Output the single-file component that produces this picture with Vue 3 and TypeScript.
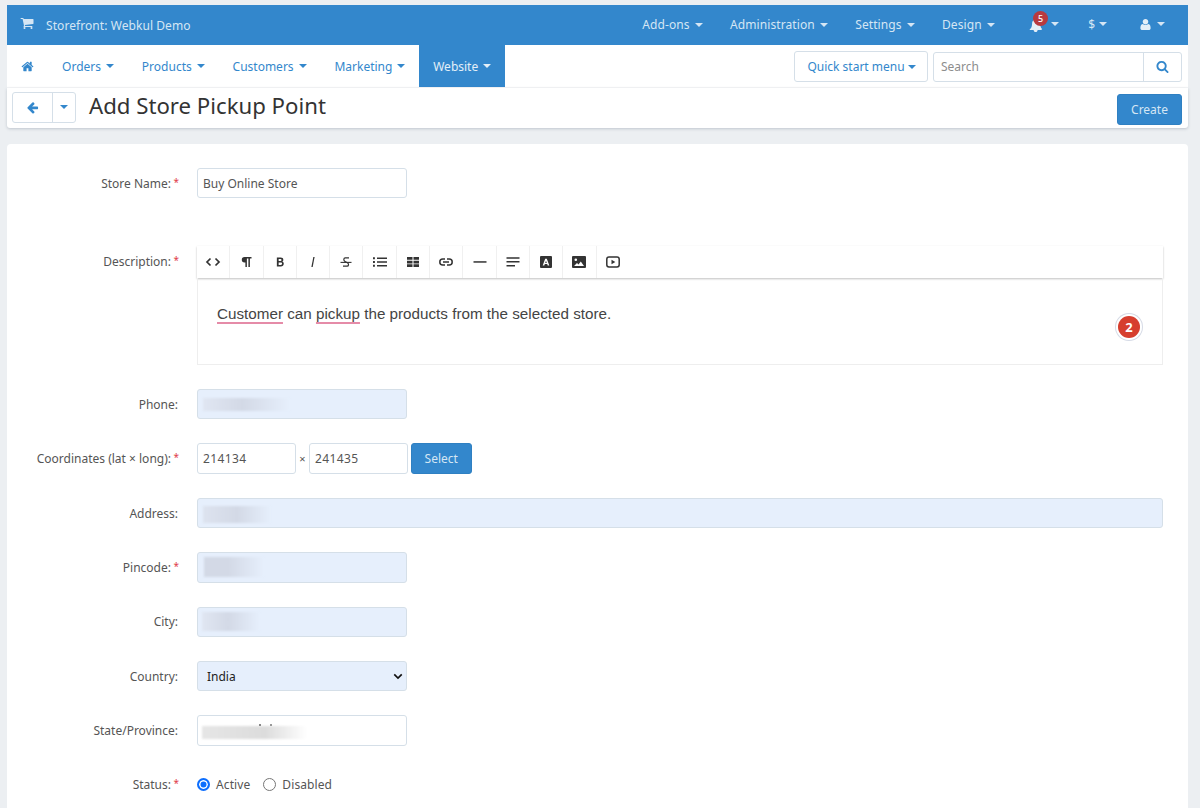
<script setup lang="ts">
const icons = {
  cart: 'M704 1536q0 52-38 90t-90 38-90-38-38-90 38-90 90-38 90 38 38 90zm896 0q0 52-38 90t-90 38-90-38-38-90 38-90 90-38 90 38 38 90zm128-1088v512q0 24-16.5 42.5t-40.5 21.5l-1044 122q13 60 13 70 0 16-24 64h920q26 0 45 19t19 45-19 45-45 19h-1024q-26 0-45-19t-19-45q0-11 8-31.5t16-36 21.5-40 15.5-29.5l-177-823h-204q-26 0-45-19t-19-45 19-45 45-19h256q16 0 28.5 6.5t19.5 15.5 13 24.5 8 26 5.5 29.5 4.5 26h1201q26 0 45 19t19 45z',
  home: 'M1472 992v480q0 26-19 45t-45 19h-384v-384h-256v384h-384q-26 0-45-19t-19-45v-480q0-1 .5-3t.5-3l575-474 575 474q1 2 1 6zm223-69l-62 74q-8 9-21 11h-3q-13 0-21-7l-692-577-692 577q-12 8-24 7-13-2-21-11l-62-74q-8-10-7-23.5t11-21.5l719-599q32-26 76-26t76 26l244 204v-195q0-14 9-23t23-9h192q14 0 23 9t9 23v408l219 182q10 8 11 21.5t-7 23.5z',
  left: 'M1664 896v128q0 53-32.5 90.5t-84.5 37.5h-704l293 294q38 36 38 90t-38 90l-75 76q-37 37-90 37-52 0-91-37l-651-652q-37-37-37-90 0-52 37-91l651-650q38-38 91-38 52 0 90 38l75 74q38 38 38 91t-38 91l-293 293h704q52 0 84.5 37.5t32.5 90.5z',
  search: 'M1216 832q0-185-131.5-316.5t-316.5-131.5-316.5 131.5-131.5 316.5 131.5 316.5 316.5 131.5 316.5-131.5 131.5-316.5zm512 832q0 52-38 90t-90 38q-54 0-90-38l-343-342q-179 124-399 124-143 0-273.5-55.5t-225-150-150-225-55.5-273.5 55.5-273.5 150-225 225-150 273.5-55.5 273.5 55.5 225 150 150 225 55.5 273.5q0 220-124 399l343 343q37 37 37 90z',
  bell: 'M1744 1408q0 26-19 45t-45 19h-448q0 106-75 181t-181 75-181-75-75-181h-448q-26 0-45-19t-19-45q50-42 91-88t85-119.5 74.5-158.5 50-206 19.5-260q0-152 117-282.5t307-158.5q-8-19-8-39 0-40 28-68t68-28 68 28 28 68q0 20-8 39 190 28 307 158.5t117 282.5q0 139 19.5 260t50 206 74.5 158.5 85 119.5 91 88z',
  user: 'M1600 1405q0 120-73 189.5t-194 69.5h-874q-121 0-194-69.5t-73-189.5q0-53 3.5-103.5t14-109 26.5-108.5 43-97.5 62-81 85.5-53.5 111.5-20q9 0 42 21.5t74.5 48 108 48 133.5 21.5 133.5-21.5 108-48 74.5-48 42-21.5q61 0 111.5 20t85.5 53.5 62 81 43 97.5 26.5 108.5 14 109 3.5 103.5zm-320-893q0 159-112.5 271.5t-271.5 112.5-271.5-112.5-112.5-271.5 112.5-271.5 271.5-112.5 271.5 112.5 112.5 271.5z'
}
const topLinks = ['Add-ons', 'Administration', 'Settings', 'Design']
const navLinks = ['Orders', 'Products', 'Customers', 'Marketing']
const tools = ['code', 'para', 'bold', 'italic', 'strike', 'list', 'table', 'link', 'hr', 'align', 'font', 'image', 'video']
</script>

<template>
  <div class="page">
    <header class="topbar">
      <div class="brand">
        <svg class="cart" viewBox="0 0 1792 1792"><path :d="icons.cart" /></svg>
        <span>Storefront: Webkul Demo</span>
      </div>
      <div class="top-right">
        <span v-for="l in topLinks" :key="l" class="top-link">{{ l }}<i class="caret" /></span>
        <span class="top-icon bell-item">
          <svg class="bell" viewBox="0 0 1792 1792"><path :d="icons.bell" /></svg>
          <b class="count">5</b><i class="caret" />
        </span>
        <span class="top-icon dollar">$<i class="caret" /></span>
        <span class="top-icon user-item">
          <svg class="user" viewBox="0 0 1792 1792"><path :d="icons.user" /></svg><i class="caret" />
        </span>
      </div>
    </header>

    <nav class="navbar">
      <span class="nav-home"><svg viewBox="0 0 1792 1792"><path :d="icons.home" /></svg></span>
      <span v-for="l in navLinks" :key="l" class="nav-link">{{ l }}<i class="caret" /></span>
      <span class="nav-link active">Website<i class="caret" /></span>
      <div class="nav-right">
        <button class="quick">Quick start menu<i class="caret small" /></button>
        <div class="search">
          <input placeholder="Search" />
          <span class="search-btn"><svg viewBox="0 0 1792 1792"><path :d="icons.search" /></svg></span>
        </div>
      </div>
    </nav>

    <section class="titlebar">
      <div class="back-group">
        <span class="back"><svg viewBox="0 0 1792 1792"><path :d="icons.left" /></svg></span>
        <span class="back-caret"><i class="caret" /></span>
      </div>
      <h1>Add Store Pickup Point</h1>
      <button class="primary create">Create</button>
    </section>

    <main class="card">
      <div class="row first">
        <label>Store Name:<em>*</em></label>
        <input class="field" value="Buy Online Store" />
      </div>

      <div class="row desc">
        <label>Description:<em>*</em></label>
        <div class="editor">
          <div class="toolbar">
            <span v-for="t in tools" :key="t" class="tool">
              <svg v-if="t === 'code'" viewBox="0 0 16 16"><path d="M5.500 4.500 2 8l3.500 3.500M10.500 4.500 14 8l-3.500 3.500" fill="none" stroke="#333" stroke-width="1.700" /></svg>
              <svg v-else-if="t === 'para'" viewBox="0 0 16 16"><path d="M6.500 3h7v1.500h-1.600V13h-1.500V4.500H8.900V13H7.400V8.400h-.9a2.700 2.700 0 0 1 0-5.400z" fill="#333" /></svg>
              <svg v-else-if="t === 'bold'" viewBox="0 0 16 16"><path transform="translate(.8 .8) scale(.9)" d="M4.500 3h4.200c1.900 0 3 .9 3 2.400 0 1-.5 1.700-1.300 2.100 1.100.3 1.800 1.200 1.800 2.400 0 1.800-1.300 3-3.300 3H4.500zm2 1.700v2.200h2c.8 0 1.200-.4 1.200-1.100s-.4-1.100-1.200-1.100zm0 3.800v2.700h2.400c.9 0 1.400-.5 1.400-1.300s-.5-1.400-1.400-1.400z" fill="#333" /></svg>
              <svg v-else-if="t === 'italic'" viewBox="0 0 16 16"><path d="M8.300 3h1.300L7.700 13H6.400z" fill="#333" /></svg>
              <svg v-else-if="t === 'strike'" viewBox="0 0 16 16"><path d="M2.500 8.400h11" stroke="#333" stroke-width="1.100" /><path d="M11 3.800H7.200C5.600 3.800 5.200 6.300 7 7.400l2.400 1.400c1.800 1 1.300 3.400-.3 3.400H5" fill="none" stroke="#333" stroke-width="1.200" /></svg>
              <svg v-else-if="t === 'list'" viewBox="0 0 16 16"><path d="M5 3.500h10V5H5zM5 7.300h10v1.500H5zM5 11h10v1.500H5zM1 3.300h1.900v1.900H1zM1 7.100h1.900V9H1zM1 10.800h1.900v1.900H1z" fill="#333" /></svg>
              <svg v-else-if="t === 'table'" viewBox="0 0 16 16"><path d="M2 3h5.500v2.800H2zM8.500 3H14v2.800H8.500zM2 6.700h5.500v2.700H2zM8.500 6.700H14v2.700H8.500zM2 10.300h5.500V13H2zM8.500 10.300H14V13H8.500z" fill="#333" /></svg>
              <svg v-else-if="t === 'link'" viewBox="0 0 16 16"><path d="M7 5H4.800a3 3 0 0 0 0 6H7M9 5h2.200a3 3 0 0 1 0 6H9M5 8h6" fill="none" stroke="#333" stroke-width="1.500" /></svg>
              <svg v-else-if="t === 'hr'" viewBox="0 0 16 16"><path d="M1.500 7.200h13v1.500h-13z" fill="#333" /></svg>
              <svg v-else-if="t === 'align'" viewBox="0 0 16 16"><path d="M1.500 3.300h13v1.500h-13zM1.500 7.100h13v1.500h-13zM1.500 10.900h8.500v1.500H1.500z" fill="#333" /></svg>
              <svg v-else-if="t === 'font'" viewBox="0 0 16 16"><path fill-rule="evenodd" d="M3 2h10a1 1 0 0 1 1 1v10a1 1 0 0 1-1 1H3a1 1 0 0 1-1-1V3a1 1 0 0 1 1-1zm4.200 2.800L4.700 11.500h1.600l.5-1.400h2.400l.5 1.400h1.600L8.800 4.800zM8 6.700l.8 2.200H7.200z" fill="#333" /></svg>
              <svg v-else-if="t === 'image'" viewBox="0 0 16 16"><path fill-rule="evenodd" d="M2 2h12a1 1 0 0 1 1 1v10a1 1 0 0 1-1 1H2a1 1 0 0 1-1-1V3a1 1 0 0 1 1-1zm2.800 2.500a1.300 1.300 0 1 0 0 2.600 1.300 1.300 0 0 0 0-2.600zM3 12h10L9.800 7.500 7.500 10.500 6 9z" fill="#333" /></svg>
              <svg v-else viewBox="0 0 16 16"><rect x="1.800" y="3" width="12.400" height="10" rx="2.200" fill="none" stroke="#333" stroke-width="1.500" /><path d="M6.500 5.800v4.400L10.300 8z" fill="#333" /></svg>
            </span>
          </div>
          <div class="editable">
            <p><u>Customer</u> can <u>pickup</u> the products from the selected store.</p>
            <span class="grammar">2</span>
          </div>
        </div>
      </div>

      <div class="row">
        <label>Phone:</label>
        <div class="wrap"><input class="field filled" /><span class="smudge s-phone" /></div>
      </div>

      <div class="row">
        <label>Coordinates (lat × long):<em>*</em></label>
        <div class="coords">
          <input class="field small-field" value="214134" />
          <span class="times">×</span>
          <input class="field small-field" value="241435" />
          <button class="primary select">Select</button>
        </div>
      </div>

      <div class="row">
        <label>Address:</label>
        <div class="wrap full"><input class="field filled wide" /><span class="smudge s-address" /></div>
      </div>

      <div class="row">
        <label>Pincode:<em>*</em></label>
        <div class="wrap"><input class="field filled" /><span class="smudge s-pin" /></div>
      </div>

      <div class="row">
        <label>City:</label>
        <div class="wrap"><input class="field filled" /><span class="smudge s-city" /></div>
      </div>

      <div class="row">
        <label>Country:</label>
        <div class="select-wrap">
          <span>India</span>
          <svg viewBox="0 0 12 8"><path d="M1.500 1.500 6 6l4.500-4.500" fill="none" stroke="#111" stroke-width="2" /></svg>
        </div>
      </div>

      <div class="row">
        <label>State/Province:</label>
        <div class="wrap"><input class="field" /><span class="smudge s-state" /><span class="specks" /></div>
      </div>

      <div class="row status">
        <label>Status:<em>*</em></label>
        <div class="radios">
          <span class="radio on" /><span class="r-label">Active</span>
          <span class="radio" /><span class="r-label">Disabled</span>
        </div>
      </div>
    </main>
  </div>
</template>

<style>
html, body { margin: 0; height: 808px; overflow: hidden; background: #eceff2; }
</style>

<style scoped>
.page {
  height: 808px;
  overflow: hidden;
  padding: 5px 12px 0 7px;
  box-sizing: border-box;
  font-family: "Noto Sans", "Open Sans", sans-serif;
  font-size: 12px;
  color: #555;
}
.caret {
  display: inline-block;
  width: 0;
  height: 0;
  margin-left: 5px;
  vertical-align: 2px;
  border-top: 4px solid currentColor;
  border-left: 4px solid transparent;
  border-right: 4px solid transparent;
}
.caret.small { margin-left: 3px; }
.topbar {
  height: 40px;
  background: #3387cc;
  color: #d5e6f4;
  display: flex;
  align-items: center;
  justify-content: space-between;
}
.brand { display: flex; align-items: center; font-size: 12px; letter-spacing: 0.07px; padding-left: 13px; }
.cart { width: 14px; height: 14px; fill: #d5e6f4; margin-right: 12px; position: relative; top: -2px; }
.top-right { display: flex; align-items: center; height: 100%; position: relative; top: -1px; }
.top-link { margin-right: 27.300px; white-space: nowrap; letter-spacing: 0.1px; }
.top-icon { display: inline-flex; align-items: center; position: relative; }
.top-icon .caret { vertical-align: 0; }
.bell-item { margin-left: 6px; margin-right: 29px; }
.bell-item .caret { margin-left: 9.100px; }
.bell { width: 14px; height: 15px; fill: #e4eff8; position: relative; top: 1px; }
.count {
  position: absolute;
  left: 5px;
  top: -6px;
  width: 15px;
  height: 15px;
  border-radius: 50%;
  background: #b83a3f;
  color: #fff;
  font-size: 9px;
  line-height: 15px;
  text-align: center;
  font-weight: 500;
}
.dollar { margin-right: 32px; }
.dollar .caret { margin-left: 4px; }
.user-item { margin-right: 23px; }
.user { width: 13px; height: 13px; fill: #e4eff8; }
.navbar {
  height: 43px;
  background: #fff;
  display: flex;
  align-items: stretch;
  color: #3387cc;
  border-bottom: 1px solid #f6f7f8;
  box-sizing: border-box;
}
.nav-home { width: 41.200px; display: flex; align-items: center; padding-left: 14px; box-sizing: border-box; }
.nav-home svg { width: 13px; height: 13px; fill: #3387cc; }
.nav-link { display: flex; align-items: center; padding: 0 13.920px; white-space: nowrap; }
.nav-link .caret { margin-left: 5px; }
.nav-link.active { background: #3387cc; color: #e3eff8; }
.nav-right { margin-left: auto; display: flex; align-items: center; padding-right: 6px; padding-top: 1px; }
.quick {
  width: 134px;
  height: 31px;
  background: #fff;
  border: 1px solid #d5dfe8;
  border-radius: 3px;
  color: #3387cc;
  font: inherit;
  padding: 0 0 0 1px;
  margin-right: 5px;
}
.search { display: flex; width: 249px; height: 30px; border: 1px solid #d5dfe8; border-radius: 3px; box-sizing: border-box; }
.search input { flex: 1; min-width: 0; border: 0; outline: 0; padding: 0 6px 0 7px; font: inherit; background: transparent; }
.search input::placeholder { color: #8d8d8d; }
.search-btn { width: 37px; border-left: 1px solid #d5dfe8; display: flex; align-items: center; justify-content: center; }
.search-btn svg { width: 13px; height: 13px; fill: #3387cc; }
.titlebar {
  height: 40px;
  background: #fff;
  display: flex;
  align-items: center;
  padding: 0 6px 0 5px;
  box-sizing: border-box;
  border-radius: 0 0 3px 3px;
  box-shadow: 0 1px 3px rgba(60, 80, 100, 0.25);
  position: relative;
}
.back-group { display: flex; height: 31px; width: 64px; border: 1px solid #d5dfe8; border-radius: 3px; box-sizing: border-box; position: relative; top: -1px; color: #3387cc; }
.back { width: 39px; display: flex; align-items: center; justify-content: center; border-right: 1px solid #d5dfe8; }
.back svg { width: 13px; height: 13px; fill: #3387cc; }
.back-caret { flex: 1; display: flex; align-items: center; justify-content: center; }
.back-caret .caret { margin: 0; border-width: 4px 4px 0; }
h1 { margin: 0 0 0 13px; font-size: 22.200px; font-weight: 400; color: #333; position: relative; top: -3px; }
.primary {
  background: #3387cc;
  color: #d5e6f4;
  border: 1px solid #2f80c2;
  border-radius: 3px;
  font: inherit;
  padding: 0;
}
.create { margin-left: auto; width: 65px; height: 31px; position: relative; top: 1px; }
.card {
  margin-top: 16px;
  background: #fff;
  border-radius: 4px 4px 0 0;
  padding: 24px 25px 40px 0;
  height: 700px;
  box-sizing: border-box;
}
.row { display: flex; align-items: center; min-height: 30.400px; margin-bottom: 24px; }
.row.first { margin-bottom: 48px; }
.row.desc { align-items: flex-start; }
.row.desc label { margin-top: 7px; }
label { width: 171px; flex: none; margin-right: 19px; text-align: right; white-space: nowrap; color: #555; }
em { display: inline-block; width: 4.500px; margin-left: 2.500px; color: #e0404a; font-style: normal; font-size: 10px; line-height: 1; position: relative; top: -2px; text-align: left; overflow: visible; }
.field {
  width: 210px;
  height: 30.400px;
  box-sizing: border-box;
  border: 1px solid #d5dfe8;
  border-radius: 3px;
  padding: 0 5px;
  font: inherit;
  color: #555;
  background: #fff;
  outline: 0;
}
.filled { background: #e6effc; }
.wide { width: 100%; }
.wrap { position: relative; width: 210px; height: 30.400px; }
.wrap.full { flex: 1; width: auto; }
.smudge { position: absolute; filter: blur(1px); }
.s-phone { left: 6px; top: 9px; width: 87px; height: 13px; background: linear-gradient(90deg, #e0e6f2, #d3d9e6 45%, #e6effc); }
.s-address { left: 6px; top: 8.500px; width: 68px; height: 17px; background: linear-gradient(90deg, #dde3ef, #d3d9e6 50%, #e6effc); }
.s-pin { left: 7px; top: 5px; width: 60px; height: 20px; background: linear-gradient(90deg, #d3d9e6, #d3d9e6 40%, #e6effc); }
.s-city { left: 5px; top: 5px; width: 58px; height: 19px; background: linear-gradient(90deg, #e0e6f2, #d3d9e6 45%, #e6effc); }
.s-state { left: 5px; top: 11px; width: 105px; height: 13px; background: linear-gradient(90deg, #e6e6e6, #dcdcdc 60%, #fff); }
.specks { position: absolute; left: 62px; top: 9px; width: 2px; height: 2px; background: #888; box-shadow: 11px 0 #999; }
.editor { flex: 1; min-width: 0; }
.toolbar {
  height: 32px;
  display: flex;
  box-shadow: 0 1px 2px rgba(0, 0, 0, 0.25);
  position: relative;
  background: #fff;
}
.tool {
  width: 33.300px;
  display: flex;
  align-items: center;
  justify-content: center;
  border-right: 1px solid #f0f0f0;
  box-sizing: border-box;
}
.tool:last-child { border-right: 0; }
.tool svg { width: 16px; height: 16px; }
.editable {
  height: 86.700px;
  border: 1px solid #eee;
  border-top: 0;
  box-sizing: border-box;
  padding: 27px 19px;
  position: relative;
  font-family: "Liberation Sans", Arial, sans-serif;
  font-size: 15.230px;
  color: #444;
}
.editable p { margin: 0; line-height: 18px; }
.editable u { text-decoration: underline; text-decoration-color: #e58ba8; text-decoration-thickness: 2px; text-underline-offset: 3px; }
.grammar {
  position: absolute;
  right: 22px;
  top: 38px;
  width: 22px;
  height: 22px;
  border-radius: 50%;
  background: #d63e2e;
  color: #fff;
  font-family: "Noto Sans", sans-serif;
  font-size: 13px;
  font-weight: 700;
  line-height: 22px;
  text-align: center;
  box-shadow: 0 0 0 2px #fff, 0 0 0 3px #d6dbe6;
}
.coords { display: flex; align-items: center; }
.small-field { width: 99px; letter-spacing: 0.400px; }
.times { width: 13px; text-align: center; font-size: 11px; }
.select { width: 60.500px; height: 30.400px; margin-left: 3px; }
.select-wrap {
  width: 210px;
  height: 30.400px;
  box-sizing: border-box;
  background: #e6effc;
  border: 1px solid #d5dfe8;
  border-radius: 3px;
  padding: 0 3px 0 9px;
  display: flex;
  align-items: center;
  justify-content: space-between;
  color: #222;
}
.select-wrap svg { width: 10px; height: 7px; }
.status { margin-bottom: 0; margin-top: -1px; }
.radios { display: flex; align-items: center; }
.radio {
  width: 11px;
  height: 11px;
  border-radius: 50%;
  border: 1px solid #767676;
  background: #fff;
  margin-right: 6px;
}
.radio.on { border: 2px solid #0d6efd; width: 9px; height: 9px; background: #0d6efd; box-shadow: inset 0 0 0 1.500px #fff; }
.r-label { margin-right: 13px; letter-spacing: 0.100px; }
</style>
